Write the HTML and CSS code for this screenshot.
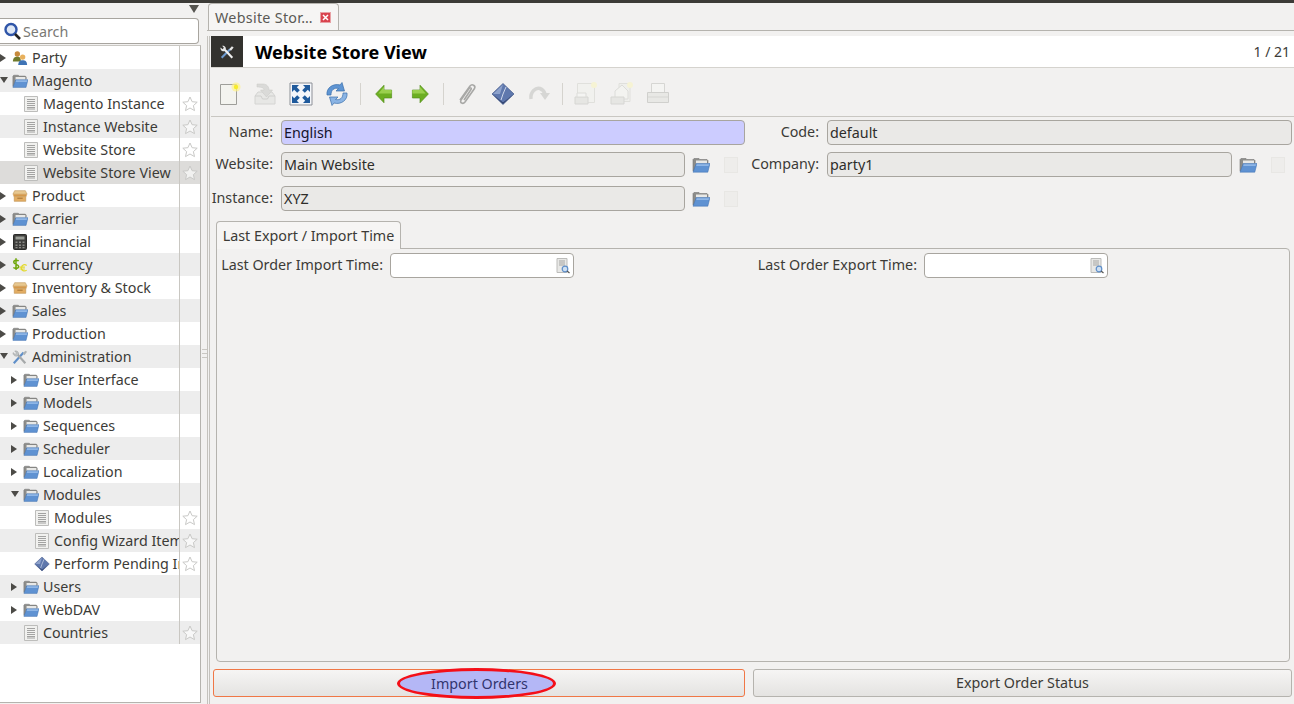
FILE: index.html
```html
<!DOCTYPE html>
<html lang="en">

<head>
    <meta charset="UTF-8">
    <meta name="viewport" content="width=device-width, initial-scale=1.0">
    <title>Website Store View</title>
    <link rel="stylesheet" href="styles.css">
</head>

<body>
    <!-- icon set -->
    <svg class="icon-defs" xmlns="http://www.w3.org/2000/svg">
        <symbol id="i-folder" viewBox="0 0 18 16">
            <path d="M1 14V2.500L2 1.500h5l1 1h7l1 1V6H5L3 14z" fill="#8d8d8a" stroke="#777" stroke-width=".6"/>
            <path d="M4 3.500h11V7H4z" fill="#e8e8e6"/>
            <path d="M4.200 6.500H18l-2.200 8.700H1z" fill="#5f92d2" stroke="#3f6fae" stroke-width=".5"/>
            <path d="M4.600 7.200h12.400l-.4 1.800H4.200z" fill="#8fb6e6"/>
        </symbol>
        <symbol id="i-doc" viewBox="0 0 14 16">
            <path d="M.5.500h13v15H.5z" fill="#f1f1ef" stroke="#bdbdbb"/>
            <path d="M3 3.500h8M3 5.500h8M3 7.500h8M3 9.500h8M3 11.500h8M3 13h8" stroke="#9a9a98" stroke-width=".9"/>
        </symbol>
        <symbol id="i-star" viewBox="0 0 16 16">
            <path d="M8 1l2.100 4.700 5.100.5-3.800 3.400 1.100 5L8 12l-4.500 2.600 1.100-5L.8 6.200l5.100-.5z" fill="#fff" fill-opacity=".6" stroke="#c9c9c7"/>
        </symbol>
        <symbol id="i-party" viewBox="0 0 18 16">
            <circle cx="6" cy="3.500" r="3" fill="#c78a3c"/>
            <path d="M1 12c0-4 2-5.500 5-5.500s4 1.500 4 5.500z" fill="#6f7a2c"/>
            <circle cx="12" cy="7" r="3" fill="#e8b05c"/>
            <path d="M7 16c0-4 2-5.500 5-5.500s5 1.500 5 5.500z" fill="#3f73b5"/>
        </symbol>
        <symbol id="i-box" viewBox="0 0 18 16">
            <path d="M3 2h12l2 4H1z" fill="#e8c890" stroke="#b98b4a" stroke-width=".6"/>
            <path d="M1.500 6h15v2.500h-15z" fill="#d59a4c"/>
            <path d="M2.500 8.500h13V14h-13z" fill="#e3ad63" stroke="#b98b4a" stroke-width=".6"/>
            <path d="M6 10.500h6" stroke="#a87636" stroke-width="1.200"/>
        </symbol>
        <symbol id="i-calc" viewBox="0 0 14 16">
            <rect x=".5" y=".5" width="13" height="15" rx="1" fill="#3f3f3d" stroke="#2c2c2a"/>
            <path d="M2.500 2.500h9v3h-9z" fill="#9a9d96"/>
            <path d="M2.500 7.500h2v1.500h-2zM6 7.500h2v1.500H6zM9.500 7.500h2v1.500h-2zM2.500 10.500h2V12h-2zM6 10.500h2V12H6zM9.500 10.500h2V12h-2zM2.500 13h2v1.200h-2zM6 13h2v1.200H6zM9.500 13h2v1.200h-2z" fill="#8b8b88"/>
        </symbol>
        <symbol id="i-currency" viewBox="0 0 18 16">
            <path d="M7.500 3.500C6.500 2.500 2 2 2 4.800s5.500 2.200 5.500 5-4.500 2.300-6 1M4.500.5v13" fill="none" stroke="#6fa60a" stroke-width="1.700"/>
            <path d="M16.500 8.500c-2-1.500-5.500-1-6 2.500s3.500 4.500 6 3M8.500 10.500h6M8.500 12.500h6" fill="none" stroke="#e3d92c" stroke-width="1.400"/>
        </symbol>
        <symbol id="i-tools" viewBox="0 0 18 16">
            <path d="M2 15L13 3" stroke="#5f8fc9" stroke-width="2.400"/>
            <path d="M12 4l3-3 2 1-3 4z" fill="#aeb3b5"/>
            <path d="M15 15L6 5" stroke="#a6a9aa" stroke-width="2.400"/>
            <path d="M7.500 5.500C8 2.500 5.500 .5 3 1.200l2 2.300-1.500 1.500-2.300-2C.5 5.500 3.500 8 6 6.800z" fill="#bfc2c3" stroke="#8a8d8e" stroke-width=".4"/>
        </symbol>
        <symbol id="i-tools-light" viewBox="0 0 18 18">
            <path d="M3 15.500L12.500 6" stroke="#6d9bd1" stroke-width="2.400"/>
            <path d="M11.500 6l3-3.500 2 1.500-3 3.500z" fill="#e6e6e6"/>
            <path d="M15 15.500L6.500 6.500" stroke="#f0f0f0" stroke-width="2.400"/>
            <path d="M7.500 6.500C8.500 3.500 6 1.500 3.500 2l2 2.300L4 5.800 1.800 3.800C1 6.500 4 9 6.500 7.800z" fill="#e8e8e8"/>
        </symbol>
        <symbol id="i-diamond" viewBox="0 0 24 24">
            <path d="M12 1.500L23 12 12 22.500 1 12z" fill="#5f78ad" stroke="#44598a" stroke-width=".7"/>
            <path d="M12 2.500L2 12h7z" fill="#8ea2cb"/>
            <path d="M15 5l-3 7-2 6" fill="none" stroke="#cfd8ea" stroke-width="1"/>
            <path d="M2 12.500l10 9.500 10-9.500-10 8z" fill="#2e3f68"/>
        </symbol>
        <symbol id="i-new" viewBox="0 0 24 24">
            <path d="M3.500 2.500h16v20h-16z" fill="#f3f3ef" stroke="#9e9e9a"/>
            <circle cx="19" cy="5" r="4.500" fill="#fff28a" opacity=".7"/>
            <circle cx="19" cy="5" r="2.200" fill="#f7ec2e"/>
        </symbol>
        <symbol id="i-save" viewBox="0 0 24 24">
            <path d="M2 14l3-4h14l3 4v8H2z" fill="#e7e7e5" stroke="#d4d4d2"/>
            <path d="M2 14h6l1.500 3h5L16 14h6" fill="none" stroke="#cfcfcd"/>
            <path d="M4 2h6c4 0 6 3 6 6h3.500l-6 7-6-7H11c0-2-2-3-7-3z" fill="#dadad8" stroke="#c9c9c7" stroke-width=".5"/>
        </symbol>
        <symbol id="i-full" viewBox="0 0 24 24">
            <path d="M1 1h22v22H1z" fill="#f4f6fa" stroke="#8d9097"/>
            <path d="M3 3h7L7.800 5.200l3 3-2.600 2.600-3-3L3 10zM21 3v7l-2.200-2.200-3 3-2.600-2.600 3-3L14 3zM3 21v-7l2.200 2.200 3-3 2.600 2.600-3 3L10 21zM21 21h-7l2.200-2.200-3-3 2.600-2.600 3 3L21 14z" fill="#1f5a9c"/>
        </symbol>
        <symbol id="i-reload" viewBox="0 0 24 24">
            <path d="M2 13C1 6 8 1 15 3l2-2.500 2.500 8.500H11l2.500-2.500C9 5.500 6 8 6 13z" fill="#5f95d3" stroke="#3a6eab" stroke-width=".7"/>
            <path d="M22 11c1 7-6 12-13 10l-2 2.500L4.500 15H13l-2.500 2.500c4.500 1 7.500-1.500 7.500-6.500z" fill="#8ab4e4" stroke="#3a6eab" stroke-width=".7"/>
        </symbol>
        <symbol id="i-prev" viewBox="-3 -3 30 30">
            <path d="M1.500 12L12 1v6h9.500v10H12v6z" fill="#6cae22" stroke="#4e8a16" stroke-width=".8"/>
            <path d="M12 7h9.500v4.500H5L12 3z" fill="#9ad04e"/>
        </symbol>
        <symbol id="i-next" viewBox="-3 -3 30 30">
            <path d="M22.500 12L12 1v6H2.500v10H12v6z" fill="#6cae22" stroke="#4e8a16" stroke-width=".8"/>
            <path d="M12 7H2.500v4.500H19L12 3z" fill="#9ad04e"/>
        </symbol>
        <symbol id="i-clip" viewBox="0 0 24 24">
            <path d="M5 18L15 4c2-2.500 6-.5 4.500 2.500L10 20c-2 2.500-5.500 1-4-2l8-11.500c1-1.500 3-.5 2 1L9 18" fill="none" stroke="#a8a8a6" stroke-width="1.600"/>
        </symbol>
        <symbol id="i-redo" viewBox="0 0 24 24">
            <path d="M4 17C3 10 9 5 13 6.500c2 .7 4 2.500 5 5.500" fill="none" stroke="#d6d6d4" stroke-width="3.500"/>
            <path d="M13 11h10l-5 7z" fill="#d6d6d4"/>
        </symbol>
        <symbol id="i-report" viewBox="0 0 24 24">
            <path d="M3.500 1.500h17v19h-17z" fill="#f1f1ee" stroke="#e0e0dc"/>
            <circle cx="20" cy="3" r="3" fill="#f6f3d4"/>
            <path d="M1 15h13v7H1z" fill="#e6e6e3" stroke="#d6d6d3"/>
            <path d="M3 11h9v4H3z" fill="#f4f4f2" stroke="#dcdcd9"/>
        </symbol>
        <symbol id="i-mail" viewBox="0 0 24 24">
            <path d="M9 1.500h11v18H9z" fill="#efefec" stroke="#e0e0dc"/>
            <circle cx="20" cy="3" r="3" fill="#f6f3d4"/>
            <path d="M5 9l7-6 6 6v8H5z" fill="#f3f3f0" stroke="#dcdcd9"/>
            <path d="M1 15h13v7H1z" fill="#e6e6e3" stroke="#d6d6d3"/>
        </symbol>
        <symbol id="i-print" viewBox="0 0 24 24">
            <path d="M5.500 1.500h13v9h-13z" fill="#f4f4f2" stroke="#d6d6d3"/>
            <path d="M1.500 10.500h21v10h-21z" fill="#e8e8e5" stroke="#d0d0cd"/>
            <path d="M2 15h20" stroke="#d6d6d3"/>
        </symbol>
        <symbol id="i-search-doc" viewBox="0 0 14 16">
            <path d="M1 .5h10v14H1z" fill="#e8e8e6" stroke="#bcbcba"/>
            <path d="M3 3h6M3 5h6M3 7h6" stroke="#a5a5a3"/>
            <circle cx="9" cy="11" r="2.800" fill="#cfe0f2" stroke="#5f8fc9" stroke-width="1.200"/>
            <path d="M11 13l2.500 2" stroke="#555" stroke-width="1.200"/>
        </symbol>
    </svg>

    <div class="topbar"></div>

    <div class="app">
        <!-- left menu -->
        <aside class="sidebar">
            <div class="menu-toggle"><span class="arrow-big"></span></div>
            <div class="search">
                <svg class="search-icon" viewBox="0 0 18 18">
                    <circle cx="8" cy="7.500" r="5.500" fill="#dfe8f5" stroke="#2f55a8" stroke-width="2.400"/>
                    <path d="M12 12l5 5" stroke="#222" stroke-width="2.600"/>
                </svg>
                <span class="search-text">Search</span>
            </div>
            <div class="tree">
                <div class="row"><span class="name"><i class="arrow closed"></i><svg class="ti"><use href="#i-party"/></svg><span>Party</span></span><span class="fav"></span></div>
                <div class="row alt"><span class="name"><i class="arrow open"></i><svg class="ti"><use href="#i-folder"/></svg><span>Magento</span></span><span class="fav"></span></div>
                <div class="row"><span class="name lvl1"><i class="arrow"></i><svg class="ti"><use href="#i-doc"/></svg><span>Magento Instance</span></span><span class="fav"><svg class="star"><use href="#i-star"/></svg></span></div>
                <div class="row alt"><span class="name lvl1"><i class="arrow"></i><svg class="ti"><use href="#i-doc"/></svg><span>Instance Website</span></span><span class="fav"><svg class="star"><use href="#i-star"/></svg></span></div>
                <div class="row"><span class="name lvl1"><i class="arrow"></i><svg class="ti"><use href="#i-doc"/></svg><span>Website Store</span></span><span class="fav"><svg class="star"><use href="#i-star"/></svg></span></div>
                <div class="row selected"><span class="name lvl1"><i class="arrow"></i><svg class="ti"><use href="#i-doc"/></svg><span>Website Store View</span></span><span class="fav"><svg class="star"><use href="#i-star"/></svg></span></div>
                <div class="row"><span class="name"><i class="arrow closed"></i><svg class="ti"><use href="#i-box"/></svg><span>Product</span></span><span class="fav"></span></div>
                <div class="row alt"><span class="name"><i class="arrow closed"></i><svg class="ti"><use href="#i-folder"/></svg><span>Carrier</span></span><span class="fav"></span></div>
                <div class="row"><span class="name"><i class="arrow closed"></i><svg class="ti"><use href="#i-calc"/></svg><span>Financial</span></span><span class="fav"></span></div>
                <div class="row alt"><span class="name"><i class="arrow closed"></i><svg class="ti"><use href="#i-currency"/></svg><span>Currency</span></span><span class="fav"></span></div>
                <div class="row"><span class="name"><i class="arrow closed"></i><svg class="ti"><use href="#i-box"/></svg><span>Inventory &amp; Stock</span></span><span class="fav"></span></div>
                <div class="row alt"><span class="name"><i class="arrow closed"></i><svg class="ti"><use href="#i-folder"/></svg><span>Sales</span></span><span class="fav"></span></div>
                <div class="row"><span class="name"><i class="arrow closed"></i><svg class="ti"><use href="#i-folder"/></svg><span>Production</span></span><span class="fav"></span></div>
                <div class="row alt"><span class="name"><i class="arrow open"></i><svg class="ti"><use href="#i-tools"/></svg><span>Administration</span></span><span class="fav"></span></div>
                <div class="row"><span class="name lvl1"><i class="arrow closed"></i><svg class="ti"><use href="#i-folder"/></svg><span>User Interface</span></span><span class="fav"></span></div>
                <div class="row alt"><span class="name lvl1"><i class="arrow closed"></i><svg class="ti"><use href="#i-folder"/></svg><span>Models</span></span><span class="fav"></span></div>
                <div class="row"><span class="name lvl1"><i class="arrow closed"></i><svg class="ti"><use href="#i-folder"/></svg><span>Sequences</span></span><span class="fav"></span></div>
                <div class="row alt"><span class="name lvl1"><i class="arrow closed"></i><svg class="ti"><use href="#i-folder"/></svg><span>Scheduler</span></span><span class="fav"></span></div>
                <div class="row"><span class="name lvl1"><i class="arrow closed"></i><svg class="ti"><use href="#i-folder"/></svg><span>Localization</span></span><span class="fav"></span></div>
                <div class="row alt"><span class="name lvl1"><i class="arrow open"></i><svg class="ti"><use href="#i-folder"/></svg><span>Modules</span></span><span class="fav"></span></div>
                <div class="row"><span class="name lvl2"><i class="arrow"></i><svg class="ti"><use href="#i-doc"/></svg><span>Modules</span></span><span class="fav"><svg class="star"><use href="#i-star"/></svg></span></div>
                <div class="row alt"><span class="name lvl2"><i class="arrow"></i><svg class="ti"><use href="#i-doc"/></svg><span>Config Wizard Items</span></span><span class="fav"><svg class="star"><use href="#i-star"/></svg></span></div>
                <div class="row"><span class="name lvl2"><i class="arrow"></i><svg class="ti"><use href="#i-diamond"/></svg><span>Perform Pending Installation</span></span><span class="fav"><svg class="star"><use href="#i-star"/></svg></span></div>
                <div class="row alt"><span class="name lvl1"><i class="arrow closed"></i><svg class="ti"><use href="#i-folder"/></svg><span>Users</span></span><span class="fav"></span></div>
                <div class="row"><span class="name lvl1"><i class="arrow closed"></i><svg class="ti"><use href="#i-folder"/></svg><span>WebDAV</span></span><span class="fav"></span></div>
                <div class="row alt"><span class="name lvl1"><i class="arrow"></i><svg class="ti"><use href="#i-doc"/></svg><span>Countries</span></span><span class="fav"><svg class="star"><use href="#i-star"/></svg></span></div>
            </div>
        </aside>

        <div class="handle"><span class="grip"></span></div>

        <!-- main area -->
        <main class="main">
            <div class="tabbar">
                <div class="tab">
                    <span class="tab-title">Website Stor…</span>
                    <svg class="tab-close" viewBox="0 0 11 11">
                        <rect width="11" height="11" fill="#e8a0a4"/>
                        <rect x="1" y="1" width="9" height="9" fill="#d9434e"/>
                        <path d="M3 3l5 5M8 3l-5 5" stroke="#fff" stroke-width="1.500"/>
                    </svg>
                </div>
            </div>

            <div class="content">
                <div class="title-row">
                    <div class="title-icon"><svg class="title-svg"><use href="#i-tools-light"/></svg></div>
                    <div class="title-box">
                        <h1 class="title">Website Store View</h1>
                        <span class="pager">1 / 21</span>
                    </div>
                </div>

                <div class="toolbar">
                    <span class="tool"><svg><use href="#i-new"/></svg></span>
                    <span class="tool"><svg><use href="#i-save"/></svg></span>
                    <span class="tool"><svg><use href="#i-full"/></svg></span>
                    <span class="tool"><svg><use href="#i-reload"/></svg></span>
                    <span class="tool-sep"></span>
                    <span class="tool"><svg><use href="#i-prev"/></svg></span>
                    <span class="tool"><svg><use href="#i-next"/></svg></span>
                    <span class="tool-sep"></span>
                    <span class="tool"><svg><use href="#i-clip"/></svg></span>
                    <span class="tool"><svg><use href="#i-diamond"/></svg></span>
                    <span class="tool"><svg><use href="#i-redo"/></svg></span>
                    <span class="tool-sep"></span>
                    <span class="tool"><svg><use href="#i-report"/></svg></span>
                    <span class="tool"><svg><use href="#i-mail"/></svg></span>
                    <span class="tool"><svg><use href="#i-print"/></svg></span>
                </div>

                <div class="form">
                    <label class="lbl">Name:</label>
                    <div class="field required">English</div>
                    <label class="lbl">Code:</label>
                    <div class="field readonly">default</div>

                    <label class="lbl">Website:</label>
                    <div class="m2o">
                        <div class="field readonly">Main Website</div>
                        <svg class="open-btn"><use href="#i-folder"/></svg>
                        <span class="blank-doc"></span>
                    </div>
                    <label class="lbl">Company:</label>
                    <div class="m2o">
                        <div class="field readonly">party1</div>
                        <svg class="open-btn"><use href="#i-folder"/></svg>
                        <span class="blank-doc"></span>
                    </div>

                    <label class="lbl">Instance:</label>
                    <div class="m2o">
                        <div class="field readonly">XYZ</div>
                        <svg class="open-btn"><use href="#i-folder"/></svg>
                        <span class="blank-doc"></span>
                    </div>
                </div>

                <div class="notebook">
                    <div class="nb-tabs"><span class="nb-tab">Last Export / Import Time</span></div>
                    <div class="nb-panel">
                        <label class="nb-lbl">Last Order Import Time:</label>
                        <div class="date"><svg class="date-icon"><use href="#i-search-doc"/></svg></div>
                        <label class="nb-lbl">Last Order Export Time:</label>
                        <div class="date"><svg class="date-icon"><use href="#i-search-doc"/></svg></div>
                    </div>
                </div>

                <div class="actions">
                    <div class="btn focused">
                        <span class="btn-mark">Import Orders</span>
                    </div>
                    <div class="btn">Export Order Status</div>
                </div>
            </div>
        </main>
    </div>
</body>

</html>
```

FILE: styles.css
```css
html,
body {
    margin: 0;
    height: 704px;
    overflow: hidden;
}

body {
    font-family: "Noto Sans", "Open Sans", sans-serif;
    font-size: 14.3px;
    color: #3c3b37;
    background-color: #f2f1f0;
}

.icon-defs {
    position: absolute;
    width: 0;
    height: 0;
}

.topbar {
    height: 3px;
    background-color: #3c3b37;
}

.app {
    display: flex;
    height: 701px;
}

/* left menu */
.sidebar {
    width: 201px;
    flex: none;
}

.menu-toggle {
    height: 15px;
    display: flex;
    justify-content: flex-end;
    padding-right: 2px;
}

.arrow-big {
    margin-top: 2px;
    width: 0;
    height: 0;
    border-left: 5px solid transparent;
    border-right: 5px solid transparent;
    border-top: 8px solid #55544f;
}

.search {
    display: flex;
    align-items: center;
    height: 24px;
    width: 198px;
    background-color: #fff;
    border: 1px solid #a8a59f;
    border-left: none;
    border-radius: 0 4px 4px 0;
}

.search-icon {
    width: 18px;
    height: 18px;
    margin-left: 3px;
}

.search-text {
    margin-left: 2px;
    color: #7a7975;
}

.tree {
    margin-top: 1px;
    height: 656px;
    width: 200px;
    background-color: #fff;
    border-top: 1px solid #c9c7c2;
    border-right: 1px solid #b5b3ae;
    border-bottom: 1px solid #b5b3ae;
}

.row {
    display: flex;
    height: 23px;
    line-height: 23px;
}

.row.alt {
    background-color: #ededed;
}

.row.selected {
    background-color: #dddcda;
}

.name {
    display: flex;
    align-items: center;
    width: 179px;
    flex: none;
    overflow: hidden;
    white-space: nowrap;
}

.lvl1 {
    padding-left: 11px;
    width: 168px;
}

.lvl2 {
    padding-left: 22px;
    width: 157px;
}

.arrow {
    width: 12px;
    flex: none;
    display: block;
    height: 8px;
}

.arrow.closed::before {
    content: "";
    display: block;
    width: 0;
    height: 0;
    border-top: 4px solid transparent;
    border-bottom: 4px solid transparent;
    border-left: 6px solid #4c4b47;
}

.arrow.open::before {
    content: "";
    display: block;
    width: 0;
    height: 0;
    border-left: 4px solid transparent;
    border-right: 4px solid transparent;
    border-top: 6px solid #4c4b47;
}

.ti {
    width: 16px;
    height: 16px;
    flex: none;
    margin-right: 4px;
}

.fav {
    flex: 1;
    border-left: 1px solid #c9c7c2;
    display: flex;
    align-items: center;
    justify-content: center;
}

.star {
    width: 16px;
    height: 16px;
}

.handle {
    width: 6px;
    flex: none;
    display: flex;
    align-items: center;
    justify-content: center;
}

.grip {
    width: 5px;
    height: 7px;
    border-top: 1px solid #c9c7c2;
    border-bottom: 1px solid #c9c7c2;
    background: linear-gradient(#c9c7c2, #c9c7c2) center / 100% 1px no-repeat;
}

/* main area */
.main {
    flex: 1;
    min-width: 0;
}

.tabbar {
    height: 27px;
    padding-left: 1px;
    border-bottom: 1px solid #b5b3ae;
    display: flex;
}

.tab {
    width: 131px;
    height: 27px;
    display: flex;
    align-items: center;
    justify-content: space-between;
    padding: 0 7px 0 6px;
    box-sizing: border-box;
    background-color: #f6f5f4;
    border: 1px solid #b5b3ae;
    border-bottom: none;
    border-radius: 4px 4px 0 0;
}

.tab-title {
    color: #5a5955;
    letter-spacing: .3px;
}

.tab-close {
    width: 11px;
    height: 11px;
}

/* frame has a double line on the left and at the bottom */
.content {
    box-sizing: border-box;
    height: 673px;
    border-left: 1px solid #c4c2bd;
    border-bottom: 1px solid #c4c2bd;
    padding-left: 3px;
    background:
        linear-gradient(#c4c2bd, #c4c2bd) 1px 0 / 1px 100% no-repeat,
        linear-gradient(#c4c2bd, #c4c2bd) 0 100% / 100% 1px no-repeat;
    background-origin: padding-box;
}

.title-row {
    display: flex;
    box-sizing: border-box;
    height: 32px;
    margin-top: 5px;
    border-bottom: 1px solid #d5d3ce;
}

.title-icon {
    width: 32px;
    background-color: #33322f;
    display: flex;
    align-items: center;
    justify-content: center;
}

.title-svg {
    width: 16px;
    height: 16px;
}

.title-box {
    flex: 1;
    display: flex;
    align-items: center;
    justify-content: space-between;
    background-color: #fff;
    padding: 0 4px 0 12px;
}

.title {
    margin: 0;
    font-size: 18px;
    font-weight: bold;
    color: #000;
}

.pager {
    font-size: 14px;
}

.toolbar {
    display: flex;
    align-items: center;
    height: 44px;
    padding-top: 4px;
    border-bottom: 1px solid #c9c7c2;
}

.tool {
    width: 36px;
    display: flex;
    justify-content: center;
}

.tool svg {
    width: 24px;
    height: 24px;
}

.tool-sep {
    width: 1px;
    height: 22px;
    margin: 0 5px;
    background-color: #d5d3ce;
}

.form {
    display: grid;
    grid-template-columns: 68px 464px 82px 465px;
    grid-template-rows: 32px 34px 25px;
    align-items: start;
    margin: 3px 0 0 2px;
}

.lbl {
    display: flex;
    box-sizing: border-box;
    height: 25px;
    align-items: center;
    justify-content: flex-end;
    padding: 0 8px 2px 0;
    white-space: nowrap;
}

.field {
    box-sizing: border-box;
    height: 25px;
    line-height: 23px;
    padding-left: 2px;
    border: 1px solid #a8a59f;
    border-radius: 4px;
    color: #2e2d2a;
}

.field.required {
    background-color: #ccccff;
    color: #14132c;
}

.field.readonly {
    background-color: #eae9e7;
}

.m2o {
    display: flex;
    height: 25px;
    align-items: center;
}

.m2o .field {
    flex: 1;
}

.open-btn {
    width: 18px;
    height: 16px;
    margin: 0 0 0 7px;
    flex: none;
}

.blank-doc {
    width: 12px;
    height: 14px;
    margin: 0 7px 0 14px;
    flex: none;
    background-color: #eeedeb;
    border: 1px solid #e8e7e4;
}

.notebook {
    margin: 10px 4px 0 5px;
}

.nb-tabs {
    height: 27px;
    display: flex;
}

.nb-tab {
    width: 185px;
    box-sizing: border-box;
    text-align: center;
    height: 28px;
    line-height: 27px;
    white-space: nowrap;
    background-color: #f6f5f4;
    border: 1px solid #b5b3ae;
    border-bottom: none;
    border-radius: 4px 4px 0 0;
    position: relative;
    z-index: 1;
}

.nb-panel {
    box-sizing: border-box;
    height: 414px;
    border: 1px solid #b5b3ae;
    border-radius: 0 4px 4px 4px;
    padding: 4px 0 0 4px;
    display: grid;
    grid-template-columns: 169px 184px 350px 184px;
    grid-template-rows: 25px;
}

.nb-lbl {
    display: flex;
    box-sizing: border-box;
    height: 25px;
    align-items: center;
    justify-content: flex-end;
    padding: 0 7px 2px 0;
    white-space: nowrap;
}

.date {
    box-sizing: border-box;
    height: 25px;
    background-color: #fff;
    border: 1px solid #a8a59f;
    border-radius: 4px;
    display: flex;
    align-items: center;
    justify-content: flex-end;
    padding-right: 3px;
}

.date-icon {
    width: 14px;
    height: 16px;
}

.actions {
    display: grid;
    grid-template-columns: 532px 539px;
    column-gap: 8px;
    margin: 7px 0 0 2px;
}

.btn {
    box-sizing: border-box;
    height: 28px;
    padding-bottom: 2px;
    display: flex;
    align-items: center;
    justify-content: center;
    border: 1px solid #b5b3ae;
    border-radius: 3px;
    background: linear-gradient(#f6f5f4, #e4e3e1);
    position: relative;
}

.btn.focused {
    border-color: #f07746;
}

/* red marker drawn over the button */
.btn-mark {
    position: absolute;
    left: 183px;
    top: -2px;
    box-sizing: border-box;
    width: 159px;
    height: 31px;
    padding: 0 0 1px 6px;
    display: flex;
    align-items: center;
    justify-content: center;
    border: 3px solid #f40f18;
    border-radius: 50%;
    background-color: #b4b7f6;
    color: #32346e;
}
```
